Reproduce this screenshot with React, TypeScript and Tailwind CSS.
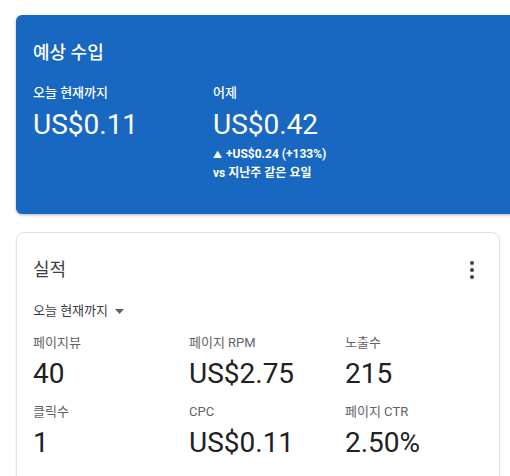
const KR = "font-['Roboto','Noto_Sans_CJK_KR',sans-serif]"

const METRICS = [
  { label: '페이지뷰', value: '40' },
  { label: '페이지 RPM', value: 'US$2.75' },
  { label: '노출수', value: '215' },
  { label: '클릭수', value: '1' },
  { label: 'CPC', value: 'US$0.11' },
  { label: '페이지 CTR', value: '2.50%' },
]

export default function App() {
  return (
    <div className={`w-[510px] h-[476px] overflow-hidden bg-white pl-4 pt-[15px] ${KR}`}>
      {/* Estimated earnings */}
      <div className="w-[510px] h-[199px] rounded-l-md bg-[#1867c0] text-white pl-[17px] pt-[26px] shadow-[0_1px_3px_rgba(0,0,0,0.3)]">
        <div className="text-[18px] leading-6 font-medium">예상 수입</div>
        <div className="flex mt-[18px]">
          <div className="w-[180px]">
            <div className="text-[13px] leading-5 font-medium">오늘 현재까지</div>
            <div className="text-[28px] leading-9 mt-[4px]">US$0.11</div>
          </div>
          <div>
            <div className="text-[13px] leading-5 font-medium">어제</div>
            <div className="text-[28px] leading-9 mt-[4px]">US$0.42</div>
            <div className="text-[12px] leading-[18px] font-bold mt-[2px]">
              <span className="text-[9px] mr-[4px]">▲</span>+US$0.24 (+133%)
            </div>
            <div className="text-[12px] leading-[18px] font-bold">vs 지난주 같은 요일</div>
          </div>
        </div>
      </div>

      {/* Performance */}
      <div className="w-[484px] mt-[18px] h-[300px] rounded-lg border border-[#e3e3e3] shadow-[0_1px_2px_rgba(0,0,0,0.12)] pl-[16px] pr-[25px] pt-[25px]">
        <div className="flex items-center justify-between">
          <div className="text-[18px] leading-6 text-[#3c4043]">실적</div>
          <svg width="4" height="18" viewBox="0 0 4 18">
            <circle cx="2" cy="2" r="2" fill="#3c4043" />
            <circle cx="2" cy="9" r="2" fill="#3c4043" />
            <circle cx="2" cy="16" r="2" fill="#3c4043" />
          </svg>
        </div>
        <div className="flex items-center gap-[7px] mt-[19px] text-[13px] leading-5 text-[#3c4043]">
          <span>오늘 현재까지</span>
          <svg width="9" height="5" viewBox="0 0 9 5"><path d="M0 0h9L4.5 5z" fill="#5f6368" /></svg>
        </div>
        <div className="grid grid-cols-[156px_156px_1fr] mt-[12px] gap-y-[10px]">
          {METRICS.map(m => (
            <div key={m.label}>
              <div className="text-[13px] leading-5 text-[#5f6368]">{m.label}</div>
              <div className="text-[28px] leading-9 text-[#202124] mt-[3px]">{m.value}</div>
            </div>
          ))}
        </div>
      </div>
    </div>
  )
}
